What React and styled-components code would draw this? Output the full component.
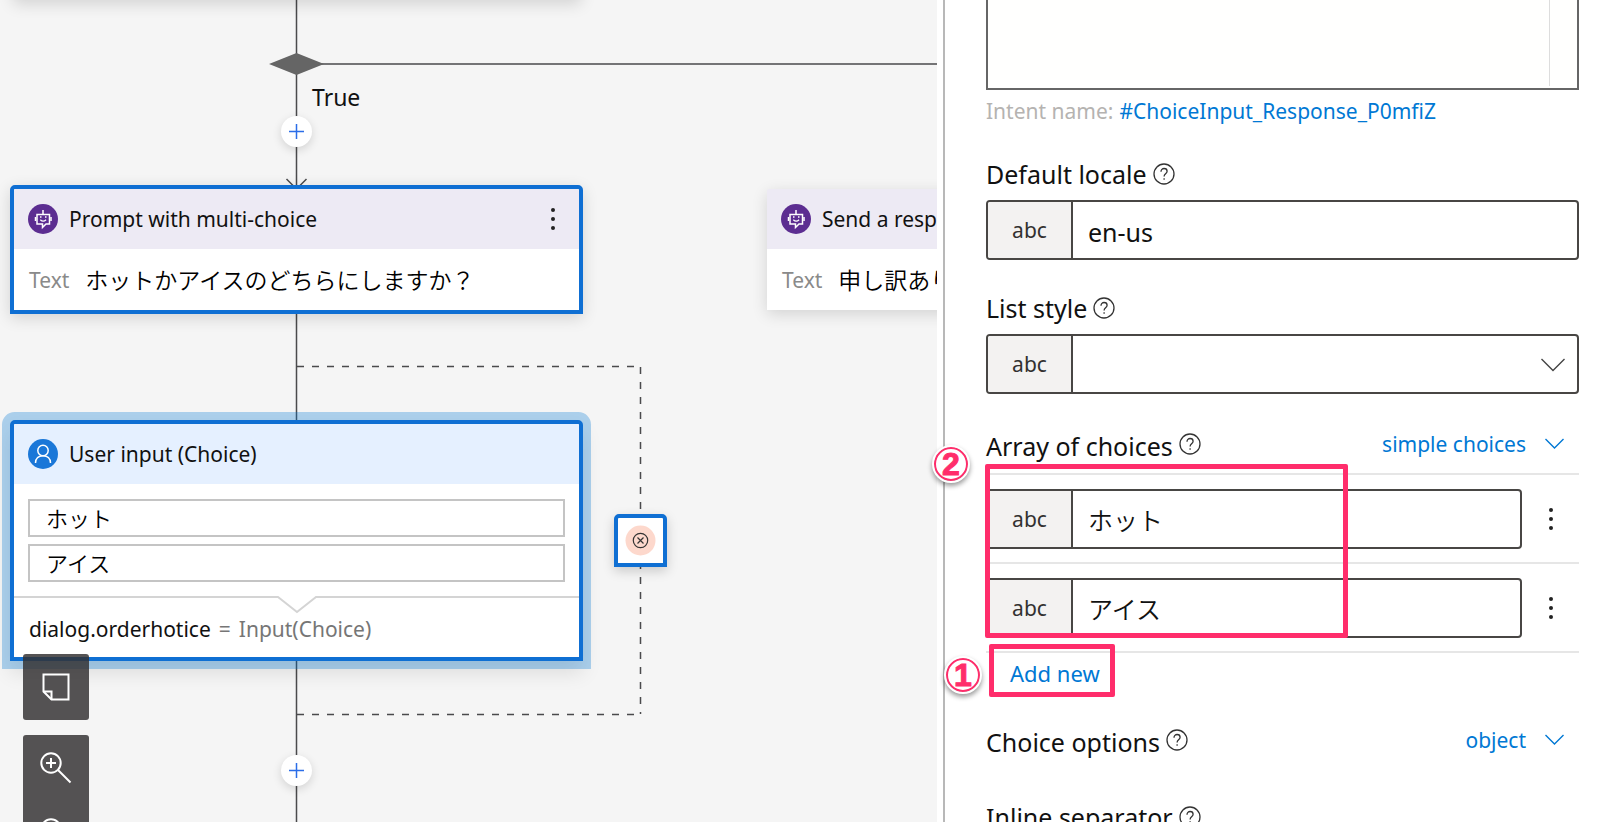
import React from "react";
import styled, { createGlobalStyle, css } from "styled-components";

const Global = createGlobalStyle`
  *, *::before, *::after { box-sizing: border-box; }
  body {
    margin: 0;
    background: #ffffff;
    color: #111111;
    font-family: "Noto Sans", "Noto Sans CJK JP", sans-serif;
    font-size: 22px;
  }
  button, input, select, textarea { font: inherit; color: inherit; }
`;

const colors = {
  blue: "#0f6fd3",
  link: "#0078d4",
  line: "#4a4a4c",
  field: "#484644",
  pink: "#ff2d6b",
};

const Page = styled.div`
  display: grid;
  grid-template-columns: minmax(0, 937fr) minmax(0, 663fr);
  height: 100vh;
  overflow: hidden;
`;

/* ---------- flow canvas ---------- */

const Canvas = styled.main`
  position: relative;
  overflow: hidden;
  background: #f5f5f5;
`;

const Connectors = styled.svg`
  position: absolute;
  left: 0;
  top: 0;
  width: 100%;
  height: 100%;
`;

const nodeAt = css`
  position: absolute;
  left: ${(p) => p.$x}px;
  top: ${(p) => p.$y}px;
`;

const BranchLabel = styled.div`
  ${nodeAt}
  font-size: 23px;
  line-height: 32px;
`;

const Node = styled.section`
  ${nodeAt}
  width: ${(p) => (p.$selected ? 573 : 568)}px;
  background: #ffffff;
  border: ${(p) => (p.$selected ? `4px solid ${colors.blue}` : "0")};
  border-radius: 5px 5px 0 0;
  box-shadow: ${(p) =>
    p.$focused
      ? "0 0 0 8px rgba(0, 120, 212, 0.3), 0 12px 20px rgba(0, 0, 0, 0.1)"
      : "0 4px 16px rgba(0, 0, 0, 0.14)"};
`;

const NodeHeader = styled.header`
  display: flex;
  align-items: center;
  gap: 11px;
  height: 60px;
  padding: 0 14px;
  border-radius: 2px 2px 0 0;
  background: ${(p) => p.$tint};
`;

const NodeTitle = styled.h2`
  flex: 1;
  margin: 0;
  font-size: 21px;
  font-weight: 400;
  line-height: 30px;
  white-space: nowrap;
`;

const NodeBody = styled.div`
  display: flex;
  align-items: center;
  gap: 16px;
  height: 61px;
  padding: 0 15px;
  white-space: nowrap;
`;

const Muted = styled.span`
  color: #8a8a8a;
  font-size: 21px;
`;

const Message = styled.span`
  color: #000000;
  font-size: 23px;
  font-weight: 350;
  line-height: 32px;
`;

const ChoiceList = styled.ul`
  display: flex;
  flex-direction: column;
  gap: 7px;
  margin: 0;
  padding: 15px 14px 14px;
  list-style: none;
`;

const ChoiceItem = styled.li`
  height: 38px;
  padding: 0 16px;
  border: 2px solid #c4c4c4;
  color: #000000;
  font-size: 22px;
  font-weight: 350;
  line-height: 34px;
`;

const Notch = styled.svg`
  display: block;
  width: 100%;
  height: 18px;
`;

const Assignment = styled.p`
  display: flex;
  gap: 8px;
  margin: 0;
  padding: 0 15px 13px;
  font-size: 21px;
  line-height: 30px;
  span { color: #767676; }
`;

const IconButton = styled.button`
  display: flex;
  align-items: center;
  justify-content: center;
  width: 24px;
  height: 36px;
  padding: 0;
  border: 0;
  background: none;
`;

const AddButton = styled.button`
  ${nodeAt}
  display: flex;
  align-items: center;
  justify-content: center;
  width: 31px;
  height: 31px;
  padding: 0;
  border: 0;
  border-radius: 50%;
  background: #ffffff;
  box-shadow: 0 3px 10px rgba(0, 0, 0, 0.14);
`;

const ErrorNode = styled.button`
  ${nodeAt}
  display: flex;
  align-items: center;
  justify-content: center;
  width: 53px;
  height: 53px;
  padding: 0;
  border: 4px solid ${colors.blue};
  border-radius: 5px 5px 0 0;
  background: #ffffff;
  box-shadow: 0 4px 12px rgba(0, 0, 0, 0.18);
`;

const Tools = styled.div`
  ${nodeAt}
  display: flex;
  flex-direction: column;
  gap: 15px;
`;

const ToolGroup = styled.div`
  display: flex;
  flex-direction: column;
  border-radius: 3px;
  background: rgba(50, 48, 49, 0.83);
`;

const Tool = styled.button`
  display: flex;
  align-items: center;
  justify-content: center;
  width: 66px;
  height: 66px;
  padding: 0;
  border: 0;
  background: none;
`;

/* ---------- property panel ---------- */

const Panel = styled.aside`
  position: relative;
  display: flex;
  flex-direction: column;
  margin-left: 6px;
  padding: 0 21px 0 41px;
  border-left: 2px solid #b8b8b8;
`;

const Editor = styled.div`
  flex: none;
  display: flex;
  height: 90px;
  border: 2px solid #666666;
  border-top: 0;
  background: #fffffe;
`;

const EditorText = styled.textarea`
  flex: 1;
  margin: 0 27px 2px 0;
  padding: 0;
  border: 0;
  border-right: 1px solid #dddddd;
  outline: 0;
  resize: none;
  background: none;
`;

const Intent = styled.p`
  display: flex;
  gap: 6px;
  margin: 0;
  padding: 6px 0 32px;
  font-size: 21px;
  line-height: 30px;
  color: #b5b3b1;
  white-space: nowrap;
  a { color: ${colors.link}; text-decoration: none; }
`;

const Group = styled.div`
  display: flex;
  flex-direction: column;
  padding-bottom: ${(p) => p.$after || 0}px;
`;

const LabelRow = styled.div`
  display: flex;
  align-items: center;
  gap: 6px;
  height: 32px;
  margin-bottom: ${(p) => p.$gap || 10}px;
`;

const Label = styled.label`
  padding-top: ${(p) => (p.$low ? 4 : 0)}px;
  font-size: 25px;
  line-height: 32px;
  white-space: nowrap;
`;

const TypeButton = styled.button`
  display: flex;
  align-items: center;
  gap: 19px;
  margin-left: auto;
  padding: 0 15px 0 0;
  border: 0;
  background: none;
  color: ${colors.link};
  font-size: 21px;
  line-height: 30px;
  white-space: nowrap;
`;

const Field = styled.div`
  position: relative;
  flex: 1;
  display: flex;
  height: 60px;
  min-height: 60px;
  border: 2px solid ${colors.field};
  border-radius: 4px;
  background: #ffffff;
  overflow: hidden;
`;

const Prefix = styled.span`
  flex: none;
  width: 85px;
  border-right: 2px solid ${colors.field};
  background: #f3f2f1;
  color: #323130;
  font-size: 21px;
  line-height: 56px;
  text-align: center;
`;

const inputLook = css`
  flex: 1;
  min-width: 0;
  padding: 0 15px;
  border: 0;
  outline: 0;
  background: none;
  font-size: 25px;
`;

const Input = styled.input`
  ${inputLook}
  padding-top: ${(p) => (p.$light ? 0 : 4)}px;
  font-weight: ${(p) => (p.$light ? 350 : 400)};
`;

const Select = styled.select`
  ${inputLook}
  appearance: none;
`;

const SelectArrow = styled.span`
  position: absolute;
  right: 12px;
  top: 22px;
  display: flex;
  pointer-events: none;
`;

const ChoiceRow = styled.div`
  display: flex;
  align-items: center;
  gap: 17px;
  height: 89px;
  padding-right: 16px;
  border-top: 2px solid #e6e6e6;
`;

const AddRow = styled.div`
  display: flex;
  height: 73px;
  padding: 4px 24px;
  border-top: 2px solid #e6e6e6;
`;

const AddNew = styled.button`
  align-self: flex-start;
  padding: 0;
  border: 0;
  background: none;
  color: ${colors.link};
  font-size: 22px;
  line-height: 32px;
  white-space: nowrap;
`;

const Highlight = styled.div`
  position: absolute;
  left: ${(p) => p.$x}px;
  top: ${(p) => p.$y}px;
  width: ${(p) => p.$w}px;
  height: ${(p) => p.$h}px;
  border: 5px solid ${colors.pink};
  border-radius: 2px;
  pointer-events: none;
`;

const Badge = styled.span`
  position: absolute;
  left: ${(p) => p.$x}px;
  top: ${(p) => p.$y}px;
  display: flex;
  align-items: center;
  justify-content: center;
  width: 34px;
  height: 34px;
  border: 2px solid ${colors.pink};
  border-radius: 50%;
  outline: 2px solid #ffffff;
  background: #ffffff;
  box-shadow: 0 3px 5px 2px rgba(0, 0, 0, 0.4);
  color: ${colors.pink};
  font-family: "Liberation Sans", sans-serif;
  font-size: 32px;
  font-weight: 700;
  line-height: 30px;
  -webkit-text-stroke: 1px ${colors.pink};
`;

/* ---------- icons ---------- */

const BotIcon = () => (
  <svg width="30" height="30" viewBox="0 0 30 30" fill="none" stroke="#fff" strokeWidth="1.5">
    <circle cx="15" cy="15" r="15" fill="#5c2d91" stroke="none" />
    <path d="M9 10.5h12.500v9.500h-3.500l-3.500 3.500v-3.500H9z" />
    <path d="M15 6v4.500M7.500 13v4M23 13v4" />
    <path d="M12.300 15.800q2.900 2.800 5.800 0" strokeWidth="1.200" />
    <path d="M12 13h1.500M17 13h1.500" />
  </svg>
);

const UserIcon = () => (
  <svg width="30" height="30" viewBox="0 0 30 30" fill="none" stroke="#fff" strokeWidth="1.5">
    <circle cx="15" cy="15" r="15" fill="#1a77d8" stroke="none" />
    <circle cx="15" cy="11.500" r="5.200" />
    <path d="M7.500 24c0-4.500 3.200-7.300 7.500-7.300s7.500 2.800 7.500 7.300" />
  </svg>
);

const Dots = () => (
  <svg width="6" height="24" viewBox="0 0 6 24" fill="#222">
    <circle cx="3" cy="3" r="2" />
    <circle cx="3" cy="12" r="2" />
    <circle cx="3" cy="21" r="2" />
  </svg>
);

const Plus = () => (
  <svg width="15" height="15" viewBox="0 0 15 15" stroke="#2b6de8" strokeWidth="1.500">
    <path d="M7.500 0v15M0 7.500h15" />
  </svg>
);

const ErrorIcon = () => (
  <svg width="31" height="31" viewBox="0 0 31 31" fill="none" stroke="#333" strokeWidth="1.200">
    <circle cx="15.500" cy="15.500" r="15" fill="#fdd8cc" stroke="none" />
    <circle cx="15.500" cy="15.500" r="7.200" />
    <path d="M12.500 12.500l6 6M18.500 12.500l-6 6" />
  </svg>
);

const Help = () => (
  <svg width="22" height="22" viewBox="0 0 22 22" fill="none" stroke="#333" strokeWidth="1.300">
    <circle cx="11" cy="11" r="10" />
    <path d="M8 8.700c0-1.900 1.300-3.200 3.100-3.200 1.800 0 3 1.100 3 2.700 0 2.600-3 2.700-3 5.300" />
    <path d="M11.100 15.200v1.600" />
  </svg>
);

const Chevron = ({ size = 19, color = colors.link }) => (
  <svg width={size} height={size / 2 + 2} viewBox={`0 0 ${size} ${size / 2 + 2}`} fill="none" stroke={color} strokeWidth="1.400">
    <path d={`M.5 1l${size / 2 - 0.5} ${size / 2 - 0.5}l${size / 2 - 0.5} ${0.5 - size / 2}`} />
  </svg>
);

const NoteIcon = () => (
  <svg width="28" height="28" viewBox="0 0 28 28" fill="none" stroke="#fff" strokeWidth="2">
    <path d="M1.500 1.500h25v25H9.500l-8-8z" />
    <path d="M1.500 18.500h8v8" />
  </svg>
);

const ZoomIcon = ({ minus }) => (
  <svg width="32" height="32" viewBox="0 0 32 32" fill="none" stroke="#fff" strokeWidth="2">
    <circle cx="11" cy="11" r="9.700" />
    <path d={minus ? "M6 11h10" : "M6 11h10M11 6v10"} />
    <path d="M18 18l12.500 12.500" />
  </svg>
);

/* ---------- parts ---------- */

const TextField = ({ id, value, label, light }) => (
  <Field>
    <Prefix>abc</Prefix>
    <Input id={id} defaultValue={value} aria-label={label} $light={light} />
  </Field>
);

const choices = ["ホット", "アイス"];

export default function App() {
  return (
    <Page>
      <Global />
      <Canvas>
        <Connectors stroke={colors.line} strokeWidth="1.500" fill="none">
          <path d="M296.500 0V2000M296.500 64H1600" />
          <path d="M269 64l27.500-11 27.500 11-27.500 11z" fill="#656565" stroke="none" />
          <path d="M286.500 179l10 10 10-10" />
          <path d="M297 366.500H640" strokeDasharray="7 8" />
          <path d="M640.500 367V714" strokeDasharray="7 8" />
          <path d="M297 714.500H640" strokeDasharray="7 8" />
        </Connectors>

        <Node $x={13} $y={-121}>
          <NodeHeader $tint="#ffffff" />
          <NodeBody />
        </Node>

        <BranchLabel $x={312} $y={81}>True</BranchLabel>
        <AddButton $x={281} $y={116} aria-label="Add action"><Plus /></AddButton>

        <Node $x={10} $y={185} $selected>
          <NodeHeader $tint="#edeaf4">
            <BotIcon />
            <NodeTitle>Prompt with multi-choice</NodeTitle>
            <IconButton aria-label="More"><Dots /></IconButton>
          </NodeHeader>
          <NodeBody>
            <Muted>Text</Muted>
            <Message>ホットかアイスのどちらにしますか？</Message>
          </NodeBody>
        </Node>

        <Node $x={767} $y={189}>
          <NodeHeader $tint="#edeaf4">
            <BotIcon />
            <NodeTitle>Send a response</NodeTitle>
          </NodeHeader>
          <NodeBody>
            <Muted>Text</Muted>
            <Message>申し訳ありません</Message>
          </NodeBody>
        </Node>

        <Node $x={10} $y={420} $selected $focused>
          <NodeHeader $tint="#e5f0ff">
            <UserIcon />
            <NodeTitle>User input (Choice)</NodeTitle>
          </NodeHeader>
          <ChoiceList>
            {choices.map((c) => <ChoiceItem key={c}>{c}</ChoiceItem>)}
          </ChoiceList>
          <Notch viewBox="0 0 565 18" fill="none" stroke="#d4d4d4" strokeWidth="2">
            <path d="M0 1h264l19 15 19-15h264" />
          </Notch>
          <Assignment>
            dialog.orderhotice <span>=</span> <span>Input(Choice)</span>
          </Assignment>
        </Node>

        <ErrorNode $x={614} $y={514} aria-label="Invalid prompt"><ErrorIcon /></ErrorNode>
        <AddButton $x={281} $y={755} aria-label="Add action"><Plus /></AddButton>

        <Tools $x={23} $y={654}>
          <ToolGroup>
            <Tool aria-label="Comment"><NoteIcon /></Tool>
          </ToolGroup>
          <ToolGroup>
            <Tool aria-label="Zoom in"><ZoomIcon /></Tool>
            <Tool aria-label="Zoom out"><ZoomIcon minus /></Tool>
          </ToolGroup>
        </Tools>
      </Canvas>

      <Panel>
        <Editor><EditorText aria-label="Expected responses" /></Editor>
        <Intent>
          Intent name: <a href="#intent">#ChoiceInput_Response_P0mfiZ</a>
        </Intent>

        <Group $after={32}>
          <LabelRow>
            <Label htmlFor="locale">Default locale</Label>
            <Help />
          </LabelRow>
          <TextField id="locale" value="en-us" />
        </Group>

        <Group $after={34}>
          <LabelRow>
            <Label htmlFor="list-style">List style</Label>
            <Help />
          </LabelRow>
          <Field>
            <Prefix>abc</Prefix>
            <Select id="list-style"><option value="" /></Select>
            <SelectArrow><Chevron size={24} color="#444" /></SelectArrow>
          </Field>
        </Group>

        <Group>
          <LabelRow $gap={13}>
            <Label as="span" $low>Array of choices</Label>
            <Help />
            <TypeButton>simple choices <Chevron /></TypeButton>
          </LabelRow>
          {choices.map((c, i) => (
            <ChoiceRow key={c}>
              <TextField value={c} label={`Choice ${i + 1}`} light />
              <IconButton aria-label="More"><Dots /></IconButton>
            </ChoiceRow>
          ))}
          <AddRow><AddNew>Add new</AddNew></AddRow>
        </Group>

        <Group $after={35}>
          <LabelRow>
            <Label as="span" $low>Choice options</Label>
            <Help />
            <TypeButton>object <Chevron /></TypeButton>
          </LabelRow>
        </Group>

        <Group>
          <LabelRow>
            <Label as="span">Inline separator</Label>
            <Help />
          </LabelRow>
        </Group>

        <Highlight $x={40} $y={464} $w={363} $h={174} />
        <Highlight $x={44} $y={644} $w={126} $h={53} />
        <Badge $x={-11} $y={447}>2</Badge>
        <Badge $x={1} $y={658}>1</Badge>
      </Panel>
    </Page>
  );
}
